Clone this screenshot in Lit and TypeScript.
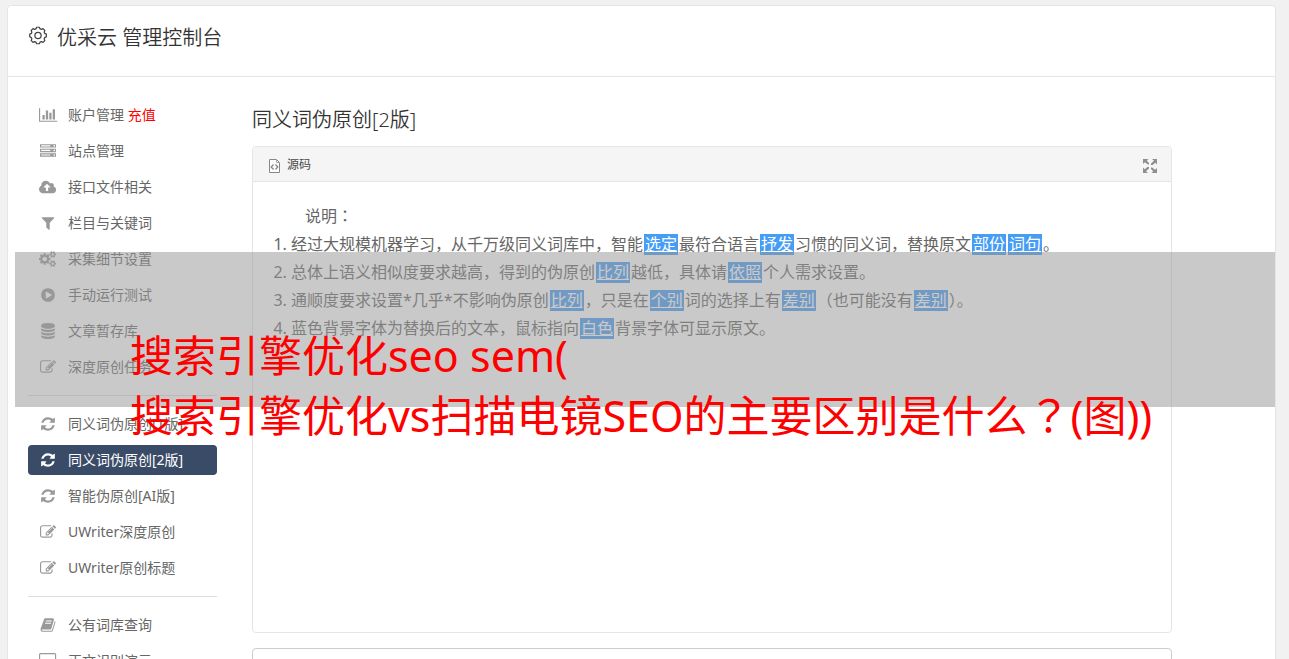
import { LitElement, html, css, svg, nothing } from "lit";
import { customElement, property } from "lit/decorators.js";

interface Icon {
  width: number;
  path: string;
}

const icons: Record<string, Icon> = {
  chart: {
    width: 2048,
    path: "M640 896v512h-256v-512h256zm384-512v1024h-256v-1024h256zm1024 1152v128h-2048v-1536h128v1408h1920zm-640-896v768h-256v-768h256zm384-384v1152h-256v-1152h256z",
  },
  server: {
    width: 1792,
    path: "M128 1408h1024v-128h-1024v128zm0-512h1024v-128h-1024v128zm1568 448q0-40-28-68t-68-28-68 28-28 68 28 68 68 28 68-28 28-68zm-1568-960h1024v-128h-1024v128zm1568 448q0-40-28-68t-68-28-68 28-28 68 28 68 68 28 68-28 28-68zm0-512q0-40-28-68t-68-28-68 28-28 68 28 68 68 28 68-28 28-68zm96 832v384h-1792v-384h1792zm0-512v384h-1792v-384h1792zm0-512v384h-1792v-384h1792z",
  },
  upload: {
    width: 1920,
    path: "M1280 928q0-14-9-23l-352-352q-9-9-23-9t-23 9l-351 351q-10 12-10 24 0 14 9 23t23 9h224v352q0 13 9.5 22.5t22.5 9.5h192q13 0 22.5-9.5t9.5-22.5v-352h224q13 0 22.5-9.5t9.5-22.5zm640 288q0 159-112.5 271.5t-271.5 112.5h-1088q-185 0-316.5-131.5t-131.5-316.5q0-130 70-240t188-165q-2-30-2-43 0-212 150-362t362-150q156 0 285.5 87t188.5 231q71-62 166-62 106 0 181 75t75 181q0 76-41 138 130 31 213.5 135.5t83.5 238.5z",
  },
  filter: {
    width: 1792,
    path: "M1595 295q17 41-14 70l-493 493v742q0 42-39 59-13 5-25 5-27 0-45-19l-256-256q-19-19-19-45v-486l-493-493q-31-29-14-70 17-39 59-39h1280q42 0 59 39z",
  },
  cogs: {
    width: 1920,
    path: "M896 896q0-106-75-181t-181-75-181 75-75 181 75 181 181 75 181-75 75-181zm768 512q0-52-38-90t-90-38-90 38-38 90q0 53 37.5 90.5t90.5 37.5 90.5-37.5 37.5-90.5zm0-1024q0-52-38-90t-90-38-90 38-38 90q0 53 37.5 90.5t90.5 37.5 90.5-37.5 37.5-90.5zm-384 421v185q0 10-7 19.5t-16 10.5l-155 24q-11 35-32 76 34 48 90 115 7 11 7 20 0 12-7 19-23 30-82.5 89.5t-78.5 59.5q-11 0-21-7l-115-90q-37 19-77 31-11 108-23 155-7 24-30 24h-186q-11 0-20-7.5t-10-17.5l-23-153q-34-10-75-31l-118 89q-7 7-20 7-11 0-21-8-144-133-144-160 0-9 7-19 10-14 41-53t47-61q-23-44-35-82l-152-24q-10-1-17-9.5t-7-19.5v-185q0-10 7-19.5t16-10.5l155-24q11-35 32-76-34-48-90-115-7-11-7-20 0-12 7-20 22-30 82-89t79-59q11 0 21 7l115 90q34-18 77-32 11-108 23-154 7-24 30-24h186q11 0 20 7.5t10 17.5l23 153q34 10 75 31l118-89q8-7 20-7 11 0 21 8 144 133 144 160 0 8-7 19-12 16-42 54t-45 60q23 48 34 82l152 23q10 2 17 10.5t7 19.5zm640 533v140q0 16-149 31-12 27-30 52 51 113 51 138 0 4-4 7-122 71-124 71-8 0-46-47t-52-68q-20 2-30 2t-30-2q-14 21-52 68t-46 47q-2 0-124-71-4-3-4-7 0-25 51-138-18-25-30-52-149-15-149-31v-140q0-16 149-31 13-29 30-52-51-113-51-138 0-4 4-7 4-2 35-20t59-34 30-16q8 0 46 46.5t52 67.5q20-2 30-2t30 2q51-71 92-112l6-2q4 0 124 70 4 3 4 7 0 25-51 138 17 23 30 52 149 15 149 31zm0-1024v140q0 16-149 31-12 27-30 52 51 113 51 138 0 4-4 7-122 71-124 71-8 0-46-47t-52-68q-20 2-30 2t-30-2q-14 21-52 68t-46 47q-2 0-124-71-4-3-4-7 0-25 51-138-18-25-30-52-149-15-149-31v-140q0-16 149-31 13-29 30-52-51-113-51-138 0-4 4-7 4-2 35-20t59-34 30-16q8 0 46 46.5t52 67.5q20-2 30-2t30 2q51-71 92-112l6-2q4 0 124 70 4 3 4 7 0 25-51 138 17 23 30 52 149 15 149 31z",
  },
  play: {
    width: 1792,
    path: "M896 128q209 0 385.5 103t279.5 279.5 103 385.5-103 385.5-279.5 279.5-385.5 103-385.5-103-279.5-279.5-103-385.5 103-385.5 279.5-279.5 385.5-103zm384 823q32-18 32-55t-32-55l-544-320q-31-19-64-1-32 19-32 56v640q0 37 32 56 16 8 32 8 17 0 32-9z",
  },
  database: {
    width: 1792,
    path: "M896 768q237 0 443-43t325-127v170q0 69-103 128t-280 93.5-385 34.5-385-34.5-280-93.5-103-128v-170q119 84 325 127t443 43zm0 768q237 0 443-43t325-127v170q0 69-103 128t-280 93.5-385 34.5-385-34.5-280-93.5-103-128v-170q119 84 325 127t443 43zm0-384q237 0 443-43t325-127v170q0 69-103 128t-280 93.5-385 34.5-385-34.5-280-93.5-103-128v-170q119 84 325 127t443 43zm0-1152q208 0 385 34.5t280 93.5 103 128v128q0 69-103 128t-280 93.5-385 34.5-385-34.5-280-93.5-103-128v-128q0-69 103-128t280-93.5 385-34.5z",
  },
  edit: {
    width: 1792,
    path: "M888 1184l116-116-152-152-116 116v56h96v96h56zm440-720q-16-16-33 1l-350 350q-17 17-1 33t33-1l350-350q17-17 1-33zm80 594v190q0 119-84.5 203.5t-203.5 84.5h-832q-119 0-203.5-84.5t-84.5-203.5v-832q0-119 84.5-203.5t203.5-84.5h832q63 0 117 25 15 7 18 23 3 17-9 29l-49 49q-14 14-32 8-23-6-45-6h-832q-66 0-113 47t-47 113v832q0 66 47 113t113 47h832q66 0 113-47t47-113v-126q0-13 9-22l64-64q15-15 35-7t20 29zm-96-738l288 288-672 672h-288v-288zm444 132l-92 92-288-288 92-92q28-28 68-28t68 28l152 152q28 28 28 68t-28 68z",
  },
  refresh: {
    width: 1792,
    path: "M1639 1056q0 5-1 7-64 268-268 434.5t-478 166.5q-146 0-282.5-55t-243.5-157l-129 129q-19 19-45 19t-45-19-19-45v-448q0-26 19-45t45-19h448q26 0 45 19t19 45-19 45l-137 137q71 66 161 102t187 36q134 0 250-65t186-179q11-17 53-117 8-23 30-23h192q13 0 22.5 9.5t9.5 22.5zm25-800v448q0 26-19 45t-45 19h-448q-26 0-45-19t-19-45 19-45l138-138q-148-137-349-137-134 0-250 65t-186 179q-11 17-53 117-8 23-30 23h-199q-13 0-22.5-9.5t-9.5-22.5v-7q65-268 270-434.5t480-166.5q146 0 284 55.5t245 156.5l130-129q19-19 45-19t45 19 19 45z",
  },
  book: {
    width: 1792,
    path: "M1703 478q40 57 18 129l-275 906q-19 64-76.5 107.5t-122.5 43.5h-923q-77 0-148.5-53.5t-99.5-131.5q-24-67-2-127 0-4 3-27t4-37q1-8-3-21.5t-3-19.5q2-11 8-21t16.5-23.5 16.5-23.5q23-38 45-91.5t30-91.5q3-10 .5-30t-.5-28q3-11 17-28t17-23q21-36 42-92t25-90q1-9-2.5-32t.5-28q4-13 22-30.5t22-22.5q19-26 42.5-84.5t27.5-96.5q1-8-3-25.5t-2-26.5q2-8 9-18t18-23 17-21q8-12 16.5-30.5t15-35 16-36 19.5-32 26.5-23.5 36-11.5 47.5 5.5l-1 3q38-9 51-9h761q74 0 114 56t18 130l-274 906q-36 119-71.5 153.5t-128.5 34.5h-869q-27 0-38 15-11 16-1 43 24 70 144 70h923q29 0 56-15.5t35-41.5l300-987q7-22 5-57 38 15 59 43zm-1064 2q-4 13 2 22.5t20 9.5h608q13 0 25.5-9.5t16.5-22.5l21-64q4-13-2-22.5t-20-9.5h-608q-13 0-25.5 9.5t-16.5 22.5zm-83 256q-4 13 2 22.5t20 9.5h608q13 0 25.5-9.5t16.5-22.5l21-64q4-13-2-22.5t-20-9.5h-608q-13 0-25.5 9.5t-16.5 22.5z",
  },
  desktop: {
    width: 1920,
    path: "M1792 992v-832q0-13-9.5-22.5t-22.5-9.5h-1600q-13 0-22.5 9.5t-9.5 22.5v832q0 13 9.5 22.5t22.5 9.5h1600q13 0 22.5-9.5t9.5-22.5zm128-832v1088q0 66-47 113t-113 47h-544q0 37 16 77.5t32 71 16 43.5q0 26-19 45t-45 19h-512q-26 0-45-19t-19-45q0-14 16-44t32-70 16-78h-544q-66 0-113-47t-47-113v-1088q0-66 47-113t113-47h1600q66 0 113 47t47 113z",
  },
};

interface Entry {
  icon: string;
  label: string;
  extra?: string;
  active?: boolean;
}

const groups: Entry[][] = [
  [
    { icon: "chart", label: "账户管理", extra: "充值" },
    { icon: "server", label: "站点管理" },
    { icon: "upload", label: "接口文件相关" },
    { icon: "filter", label: "栏目与关键词" },
    { icon: "cogs", label: "采集细节设置" },
    { icon: "play", label: "手动运行测试" },
    { icon: "database", label: "文章暂存库" },
    { icon: "edit", label: "深度原创任务" },
  ],
  [
    { icon: "refresh", label: "同义词伪原创[1版]" },
    { icon: "refresh", label: "同义词伪原创[2版]", active: true },
    { icon: "refresh", label: "智能伪原创[AI版]" },
    { icon: "edit", label: "UWriter深度原创" },
    { icon: "edit", label: "UWriter原创标题" },
  ],
  [
    { icon: "book", label: "公有词库查询" },
    { icon: "desktop", label: "正文识别演示" },
  ],
];

/* Replaced words are written between braces. */
const notes = [
  "经过大规模机器学习，从千万级同义词库中，智能{选定}最符合语言{抒发}习惯的同义词，替换原文{部份}{词句}。",
  "总体上语义相似度要求越高，得到的伪原创{比列}越低，具体请{依照}个人需求设置。",
  "通顺度要求设置*几乎*不影响伪原创{比列}，只是在{个别}词的选择上有{差别}（也可能没有{差别}）。",
  "蓝色背景字体为替换后的文本，鼠标指向{白色}背景字体可显示原文。",
];

@customElement("side-menu")
class SideMenu extends LitElement {
  @property({ attribute: false }) groups: Entry[][] = [];

  static styles = css`
    :host {
      display: block;
    }
    .group {
      display: flex;
      flex-direction: column;
      gap: 6px;
      margin: 0;
      padding: 0 0 13px;
      list-style: none;
    }
    .group + .group {
      border-top: 1px solid #ddd;
      padding-top: 13px;
    }
    .link {
      display: flex;
      align-items: center;
      gap: 10px;
      height: 30px;
      padding: 0 10px;
      border-radius: 4px;
      color: #666;
      font-size: 14px;
      line-height: 30px;
      white-space: nowrap;
      text-decoration: none;
    }
    .link.active {
      background: #3a4b67;
      color: #fff;
    }
    .icon {
      display: flex;
      justify-content: center;
      width: 20px;
      color: #999;
      flex: none;
    }
    .active .icon {
      color: #fff;
    }
    .icon svg {
      height: 16px;
      fill: currentColor;
      fill-rule: evenodd;
      overflow: visible;
    }
    .extra {
      color: #f00;
    }
  `;

  private entry(e: Entry) {
    const icon = icons[e.icon];
    return html`<li>
      <a class="link ${e.active ? "active" : ""}" href="#">
        <span class="icon">
          <svg viewBox="0 0 ${icon.width} 1792" aria-hidden="true">${svg`<path d=${icon.path}></path>`}</svg>
        </span>
        <span>${e.label}${e.extra ? html` <span class="extra">${e.extra}</span>` : nothing}</span>
      </a>
    </li>`;
  }

  render() {
    return html`<nav>
      ${this.groups.map((g) => html`<ul class="group">${g.map((e) => this.entry(e))}</ul>`)}
    </nav>`;
  }
}

@customElement("rewrite-editor")
class RewriteEditor extends LitElement {
  static styles = css`
    :host {
      display: block;
    }
    .panel {
      border: 1px solid #e5e5e5;
      border-radius: 4px;
      overflow: hidden;
    }
    .bar {
      display: flex;
      align-items: center;
      justify-content: space-between;
      height: 34px;
      padding: 0 13px 0 15px;
      background: #f5f5f5;
      border-bottom: 1px solid #e5e5e5;
    }
    .tool {
      display: flex;
      align-items: center;
      gap: 6px;
      padding: 2px 0 0;
      border: 0;
      background: none;
      color: #484848;
      font: inherit;
      font-size: 12px;
      line-height: 20px;
    }
    .tool svg {
      display: block;
      margin-top: 2px;
    }
    .text {
      min-height: 410px;
      padding: 20px;
      color: #666;
      font-size: 16px;
      line-height: 28px;
    }
    .lead {
      margin: 0;
      text-indent: 32px;
    }
    .mark {
      font-family: "Noto Sans CJK JP", sans-serif;
      line-height: 1;
    }
    .notes {
      margin: 0;
      padding-left: 18px;
    }
    .swap {
      margin: 0 1px;
      padding: 0 1px;
      display: inline-block;
      height: 21px;
      line-height: 21px;
      background: #459df5;
      color: #fff;
      text-decoration: underline;
    }
    .result {
      display: block;
      box-sizing: border-box;
      width: 100%;
      height: 200px;
      margin-top: 15px;
      padding: 8px;
      border: 1px solid #ccc;
      border-radius: 4px;
      background: #fff;
      font: inherit;
      resize: none;
    }
  `;

  private note(text: string) {
    return text
      .split(/[{}]/)
      .map((part, i) => (i % 2 ? html`<span class="swap">${part}</span>` : part));
  }

  render() {
    return html`
      <div class="panel">
        <div class="bar">
          <button class="tool" type="button">
            <svg width="13" height="16" viewBox="0 0 13 16" fill="none" stroke="#888" aria-hidden="true">
              <path d="M1.5 1.5h7l3 3v10h-10z" fill="#fff"></path>
              <path d="M8.500 1.500v3h3" stroke="#aaa"></path>
              <path d="M5.500 6.500L3.200 9l2.300 2.500M7.500 6.500L9.800 9l-2.300 2.500" stroke-width="1.300"></path>
            </svg>
            源码
          </button>
          <button class="tool" type="button" aria-label="全屏">
            <svg width="16" height="16" viewBox="0 0 16 16" fill="#8f8f8f" aria-hidden="true">
              <path d="M1 1h5.500L4.800 2.700 7 4.900v1.600H5.800L2.900 4.300 1 6z"></path>
              <path d="M15 1v5.500l-1.700-1.700L10.600 7H9V5.600l3-2.800L10 1z"></path>
              <path d="M1 15V9.500l1.700 1.700L5.400 9H7v1.400l-3 2.800L6 15z"></path>
              <path d="M15 15H9.500l1.700-1.700L9 11.100V9.500h1.200l2.900 2.200L15 10z"></path>
            </svg>
          </button>
        </div>
        <div class="text">
          <p class="lead">说明<span class="mark">：</span></p>
          <ol class="notes">
            ${notes.map((n) => html`<li>${this.note(n)}</li>`)}
          </ol>
        </div>
      </div>
      <textarea class="result" aria-label="原创结果"></textarea>
    `;
  }
}

@customElement("app-root")
class AppRoot extends LitElement {
  static styles = css`
    :host {
      display: block;
      position: relative;
      box-sizing: border-box;
      height: 100vh;
      overflow: hidden;
      padding: 5px 13px 0 7px;
      background: #f1f1f1;
      color: #333;
      font-family: "Noto Sans", "Noto Sans CJK SC", sans-serif;
      font-weight: 400;
    }
    .card {
      background: #fff;
      border: 1px solid #e5e5e5;
      border-radius: 4px;
    }
    .header {
      display: flex;
      align-items: center;
      gap: 10px;
      height: 64px;
      padding: 0 20px 6px 21px;
      border-bottom: 1px solid #e5e5e5;
    }
    .gear {
      margin-bottom: 6px;
    }
    .title,
    .heading {
      margin: 0;
      font-size: 20px;
      font-weight: 350;
      line-height: 32px;
    }
    .body {
      display: flex;
      gap: 35px;
      padding: 23px 103px 0 20px;
    }
    .menu {
      flex: none;
      width: 189px;
    }
    .main {
      flex: 1;
      min-width: 0;
      padding-top: 4px;
    }
    .heading {
      margin-bottom: 10px;
    }
    .banner {
      position: absolute;
      top: 252px;
      left: 15px;
      right: 14px;
      height: 155px;
      background: rgba(152, 152, 152, 0.52);
    }
    .caption {
      margin: 0;
      padding: 74px 0 0 115px;
      color: #f00;
      font-size: 43px;
      font-weight: 400;
      line-height: 60px;
      white-space: nowrap;
    }
    .mark {
      font-family: "Noto Sans CJK JP", sans-serif;
      line-height: 1;
    }
  `;

  render() {
    return html`
      <div class="card">
        <header class="header">
          <svg class="gear" width="18" height="19" viewBox="0 0 19 20" fill="none" stroke="#444" stroke-width="1.300" aria-hidden="true">
            <path d="M7.300 3L8.100 1.300h2.800L11.700 3l1.300.5 1.800-.7 1.900 1.900-.7 1.800.6 1.300 1.700.8v2.800l-1.700.8-.6 1.300.7 1.800-1.900 1.900-1.800-.7-1.300.5-.8 1.700H8.100L7.300 17l-1.300-.5-1.800.7-1.900-1.900.7-1.800-.5-1.300-1.700-.8V8.600l1.700-.8L3 6.500l-.7-1.800 1.900-1.900 1.800.7z" stroke-linejoin="round"></path>
            <circle cx="9.500" cy="10" r="3.300"></circle>
          </svg>
          <h1 class="title">优采云 管理控制台</h1>
        </header>
        <div class="body">
          <side-menu class="menu" .groups=${groups}></side-menu>
          <main class="main">
            <h2 class="heading">同义词伪原创[2版]</h2>
            <rewrite-editor></rewrite-editor>
          </main>
        </div>
      </div>
      <div class="banner">
        <p class="caption">
          搜索引擎优化seo sem(<br />搜索引擎优化vs扫描电镜SEO的主要区别是什么<span class="mark">？</span>(图))
        </p>
      </div>
    `;
  }
}
